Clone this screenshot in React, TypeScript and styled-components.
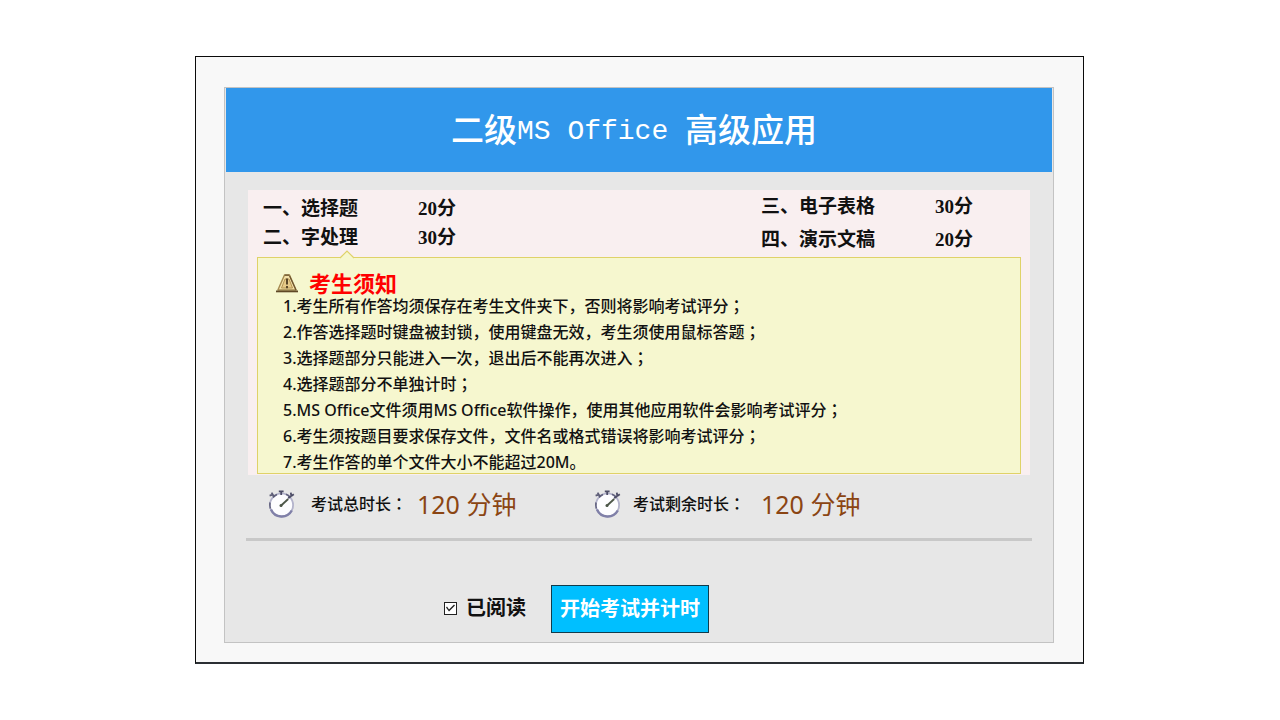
import React, { useState } from "react";
import styled, { createGlobalStyle } from "styled-components";

const sans = `"Noto Sans", "Noto Sans CJK SC", sans-serif`;
const song = `"Liberation Serif", "Noto Sans CJK SC", serif`;

const GlobalStyle = createGlobalStyle`
  *, *::before, *::after { box-sizing: border-box; }
  body { margin: 0; background: #fff; color: #111; font-family: ${sans}; }
`;

const Page = styled.main`
  padding: 56px 17px 56px 16px;
`;

const Frame = styled.div`
  max-width: 889px;
  margin: 0 auto;
  padding: 30px 29px 19px 28px;
  background: #f8f8f8;
  border: 1px solid #0a0a0a;
  border-bottom: 2px solid #2b2f33;
`;

const Card = styled.section`
  padding: 0 1px;
  background: #e7e7e7;
  border: 1px solid #c3c3c3;
`;

const Header = styled.header`
  display: flex;
  align-items: center;
  justify-content: center;
  height: 84px;
  padding: 0 10px 4px 0;
  background: #3197eb;
`;

const Title = styled.h1`
  display: flex;
  align-items: center;
  margin: 0;
  color: #fff;
  font-family: "Noto Sans CJK SC", sans-serif;
  font-size: 33px;
  font-weight: 500;
  line-height: 40px;
  white-space: pre;
`;

const Latin = styled.span`
  padding-top: 8px;
  font-family: "Liberation Mono", monospace;
  font-size: 28px;
`;

const Panel = styled.div`
  margin: 18px 22px 0;
  padding-bottom: 1px;
  background: #f9eff0;
`;

const Sections = styled.div`
  display: flex;
  justify-content: space-between;
  align-items: center;
  min-height: 67px;
  padding-left: 15px;
`;

const SectionTable = styled.table<{ $row: number; $name: number; $end: number }>`
  border-collapse: collapse;
  margin-right: ${(p) => p.$end}px;
  font-family: ${song};
  font-size: 19px;

  th, td {
    height: ${(p) => p.$row}px;
    padding: 0;
    font-weight: 700;
    line-height: 24px;
    text-align: left;
  }
  th { width: ${(p) => p.$name}px; }
`;

const Notice = styled.section`
  position: relative;
  margin: 0 9px;
  padding: 13px 18px 1px;
  background: #f6f7cf;
  border: 1px solid #dfd268;
`;

const Pointer = styled.svg`
  position: absolute;
  left: 81px;
  top: -8px;
`;

const NoticeHead = styled.div`
  display: flex;
  align-items: center;
  gap: 11px;
`;

const NoticeTitle = styled.h2`
  margin: 0;
  color: #f00;
  font-size: 22px;
  font-weight: 700;
  line-height: 24px;
`;

const Rules = styled.ul`
  display: flex;
  flex-direction: column;
  gap: 6px;
  margin: 0;
  padding: 1px 0 0 7px;
  list-style: none;
  font-size: 16px;
  font-weight: 500;
  line-height: 20px;

  li { min-height: 20px; }
`;

const Centred = styled.span`
  font-family: "Noto Sans CJK TC", sans-serif;
  line-height: 16px;
`;

const Timers = styled.div`
  display: grid;
  grid-template-columns: 326px 1fr;
  align-items: center;
  height: 58px;
  margin-left: 42px;
`;

const Timer = styled.div<{ $icon: number; $label: number }>`
  display: grid;
  grid-template-columns: ${(p) => p.$icon}px ${(p) => p.$label}px auto;
  align-items: center;
`;

const TimerLabel = styled.span`
  font-size: 16px;
  font-weight: 500;
  line-height: 24px;
`;

const TimerValue = styled.span`
  color: #8b4513;
  font-size: 25px;
  line-height: 32px;
`;

const Divider = styled.hr`
  height: 3px;
  margin: 5px 20px 0;
  border: 0;
  background: #c8c8c8;
`;

const Footer = styled.form`
  display: flex;
  align-items: center;
  justify-content: center;
  gap: 25px;
  padding: 44px 125px 9px 0;
`;

const ReadLabel = styled.label`
  display: flex;
  align-items: center;
  gap: 9px;
  height: 32px;
  padding-bottom: 2px;
  font-family: ${song};
  font-size: 20px;
  font-weight: 700;
  line-height: 24px;
`;

const Checkbox = styled.input`
  appearance: none;
  width: 13px;
  height: 13px;
  margin: 0;
  background: #fff;
  border: 1px solid #222;

  &:checked::after {
    content: "";
    display: block;
    width: 11px;
    height: 11px;
    background: #222;
    clip-path: polygon(1px 5px, 2px 4px, 4px 7px, 9px 2px, 10px 3px, 4px 9px);
  }
`;

const StartButton = styled.button`
  min-width: 158px;
  height: 48px;
  padding: 0 8px;
  color: #fff;
  background: #00bfff;
  border: 1px solid #103c4c;
  border-radius: 0;
  font-family: ${song};
  font-size: 20px;
  font-weight: 700;
  line-height: 24px;
  cursor: pointer;
`;

const rules = [
  "1.考生所有作答均须保存在考生文件夹下，否则将影响考试评分；",
  "2.作答选择题时键盘被封锁，使用键盘无效，考生须使用鼠标答题；",
  "3.选择题部分只能进入一次，退出后不能再次进入；",
  "4.选择题部分不单独计时；",
  "5.MS Office文件须用MS Office软件操作，使用其他应用软件会影响考试评分；",
  "6.考生须按题目要求保存文件，文件名或格式错误将影响考试评分；",
  "7.考生作答的单个文件大小不能超过20M。",
];

const leftSections = [["一、选择题", "20分"], ["二、字处理", "30分"]];
const rightSections = [["三、电子表格", "30分"], ["四、演示文稿", "20分"]];

// Semicolons and colons sit in the middle of their cell.
function Line({ text }: { text: string }) {
  return (
    <>
      {text.split(/([；：])/).map((part, i) =>
        i % 2 ? <Centred key={i}>{part}</Centred> : part
      )}
    </>
  );
}

function SectionList(props: { rows: string[][]; row: number; name: number; end: number }) {
  return (
    <SectionTable $row={props.row} $name={props.name} $end={props.end}>
      <tbody>
        {props.rows.map(([name, score]) => (
          <tr key={name}>
            <th scope="row">{name}</th>
            <td>{score}</td>
          </tr>
        ))}
      </tbody>
    </SectionTable>
  );
}

function WarningIcon() {
  return (
    <svg width="22" height="19" viewBox="0 0 22 19" aria-hidden="true">
      <path d="M8.5 1h5l6.6 15H1.9z" fill="#f3e0a8" stroke="#a58a50" strokeWidth="1.4" strokeLinejoin="round" />
      <path d="M8.6 1.2h4.8M13.6 2l6.4 14" fill="none" stroke="#6d5430" strokeWidth="1.2" />
      <path d="M0 17.4h22" stroke="#5f4826" strokeWidth="1.8" />
      <path d="M9 5h4L16.5 14h-11z" fill="#e6c988" stroke="#b08f4c" strokeWidth=".9" />
      <path d="M11 4.6v6" stroke="#5a4728" strokeWidth="2" />
      <path d="M11 12v2.2" stroke="#5a4728" strokeWidth="2" />
    </svg>
  );
}

function StopwatchIcon() {
  return (
    <svg width="28" height="28" viewBox="0 0 28 28" aria-hidden="true">
      <circle cx="13.5" cy="15" r="11.6" fill="#fdfdff" stroke="#b4b4cc" strokeWidth="1.8" />
      <path d="M3 19.5a11.6 11.6 0 0 0 20.8 1" fill="none" stroke="#8080a8" strokeWidth="2.4" />
      <path d="M2 12.5a12 12 0 0 0 .4 6M5 7.4a12 12 0 0 1 4-3M18 4.3a12 12 0 0 1 4 2.8" fill="none" stroke="#62627e" strokeWidth="1.6" />
      <path d="M10.8 1.4h4.8M13.2 1.4v3.6" stroke="#4c4c66" strokeWidth="1.8" />
      <path d="M1.6 5.6l3.2-1M3.6 2.6l2.6 4.4" stroke="#5c5c76" strokeWidth="1.8" />
      <path d="M22.8 2.6l.6 4M25.8 4.2l-5.6 4" stroke="#4c4c66" strokeWidth="1.8" />
      <path d="M12.6 16l7.6-7" stroke="#4c5648" strokeWidth="1.8" />
      <circle cx="13" cy="15.6" r="1.5" fill="#4c5648" />
    </svg>
  );
}

export default function App() {
  const [read, setRead] = useState(true);
  return (
    <Page>
      <GlobalStyle />
      <Frame>
        <Card>
          <Header>
            <Title>二级<Latin>MS Office </Latin>高级应用</Title>
          </Header>
          <Panel>
            <Sections>
              <SectionList rows={leftSections} row={29} name={155} end={0} />
              <SectionList rows={rightSections} row={33} name={174} end={57} />
            </Sections>
            <Notice>
              <Pointer width="16" height="9" viewBox="0 0 16 9" aria-hidden="true">
                <path d="M1 9V8L8 1l7 7v1z" fill="#f6f7cf" />
                <path d="M1 8L8 1l7 7" fill="none" stroke="#dfd268" strokeWidth="1.2" />
              </Pointer>
              <NoticeHead>
                <WarningIcon />
                <NoticeTitle>考生须知</NoticeTitle>
              </NoticeHead>
              <Rules>
                {rules.map((rule) => (
                  <li key={rule}><Line text={rule} /></li>
                ))}
              </Rules>
            </Notice>
          </Panel>
          <Timers>
            <Timer $icon={43} $label={106}>
              <StopwatchIcon />
              <TimerLabel><Line text="考试总时长：" /></TimerLabel>
              <TimerValue>120 分钟</TimerValue>
            </Timer>
            <Timer $icon={39} $label={128}>
              <StopwatchIcon />
              <TimerLabel><Line text="考试剩余时长：" /></TimerLabel>
              <TimerValue>120 分钟</TimerValue>
            </Timer>
          </Timers>
          <Divider />
          <Footer onSubmit={(e) => e.preventDefault()}>
            <ReadLabel>
              <Checkbox type="checkbox" checked={read} onChange={(e) => setRead(e.target.checked)} />
              已阅读
            </ReadLabel>
            <StartButton type="submit">开始考试并计时</StartButton>
          </Footer>
        </Card>
      </Frame>
    </Page>
  );
}
